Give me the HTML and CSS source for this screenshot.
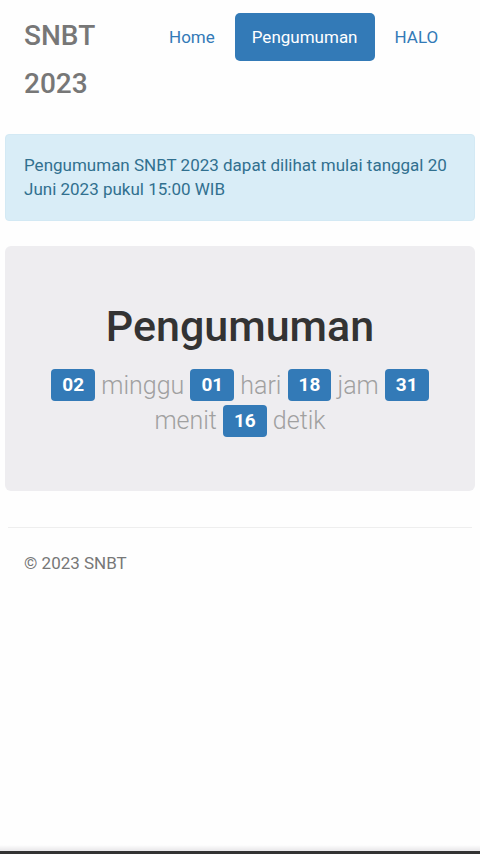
FILE: index.html
```html
<!DOCTYPE html>
<html lang="id">
<head>
<meta charset="utf-8">
<meta name="viewport" content="width=device-width, initial-scale=1">
<title>SNBT 2023</title>
<link rel="stylesheet" href="styles.css">
</head>
<body>
<header class="header">
  <div class="brand">SNBT 2023</div>
  <nav class="nav">
    <a class="pill" href="#">Home</a>
    <a class="pill active" href="#">Pengumuman</a>
    <a class="pill" href="#">HALO</a>
  </nav>
</header>
<main>
  <div class="alert">Pengumuman SNBT 2023 dapat dilihat mulai tanggal 20 Juni 2023 pukul 15:00 WIB</div>
  <section class="jumbotron">
    <h1 class="title">Pengumuman</h1>
    <p class="countdown"><span class="badge">02</span> minggu <span class="badge">01</span> hari <span class="badge">18</span> jam <span class="badge">31</span> menit <span class="badge">16</span> detik</p>
  </section>
</main>
<hr class="rule">
<footer class="footer">© 2023 SNBT</footer>
<div class="sysbar"></div>
</body>
</html>
```
FILE: styles.css
```css
* { box-sizing: border-box; }
html, body { margin: 0; padding: 0; }
body {
  background: #fefefe;
  font-family: Roboto, "Liberation Sans", sans-serif;
  font-size: 17px;
  line-height: 24px;
  color: #333;
}
.header {
  display: flex;
  align-items: flex-start;
  padding: 12px 0 0 24px;
}
.brand {
  width: 128px;
  flex: none;
  font-size: 28px;
  font-weight: 500;
  line-height: 48px;
  color: #777;
}
.nav {
  display: flex;
  gap: 3px;
  margin-top: 1px;
}
.pill {
  display: block;
  height: 48px;
  line-height: 48px;
  padding: 0 17px;
  color: #337ab7;
  text-decoration: none;
  border-radius: 5px;
}
.pill.active {
  background: #337ab7;
  color: #fff;
}
main { padding: 26px 5px 0; }
.alert {
  background: #d9edf7;
  border: 1px solid #d3e9f4;
  border-radius: 4px;
  color: #31708f;
  padding: 18px 18px 19px 18px;
  height: 87px;
}
.jumbotron {
  margin-top: 25px;
  background: #eeedf0;
  border-radius: 6px;
  padding: 57px 10px 52px;
  text-align: center;
  height: 245px;
}
.title {
  margin: 0;
  font-size: 43px;
  font-weight: 500;
  line-height: 46px;
  color: #333;
}
.countdown {
  margin: 19px 0 0;
  font-size: 25px;
  font-weight: 300;
  line-height: 35px;
  color: #a0a0a0;
  padding: 0 36px;
}
.badge {
  display: inline-block;
  height: 32px;
  line-height: 32px;
  padding: 0 11px;
  background: #337ab7;
  color: #fff;
  font-size: 19px;
  font-weight: 700;
  border-radius: 4px;
  vertical-align: middle;
  position: relative;
  top: -2px;
}
.rule {
  margin: 36px 8px 0;
  border: 0;
  border-top: 1px solid #eeeeee;
  height: 0;
}
.footer {
  margin-top: 23px;
  padding-left: 24px;
  color: #777;
}
.sysbar {
  position: fixed;
  left: 0;
  right: 0;
  bottom: 0;
  height: 9px;
  background: linear-gradient(#fefefe 0, #ebeaec 5px, #ebeaec 6px, #333 6px);
}
```
